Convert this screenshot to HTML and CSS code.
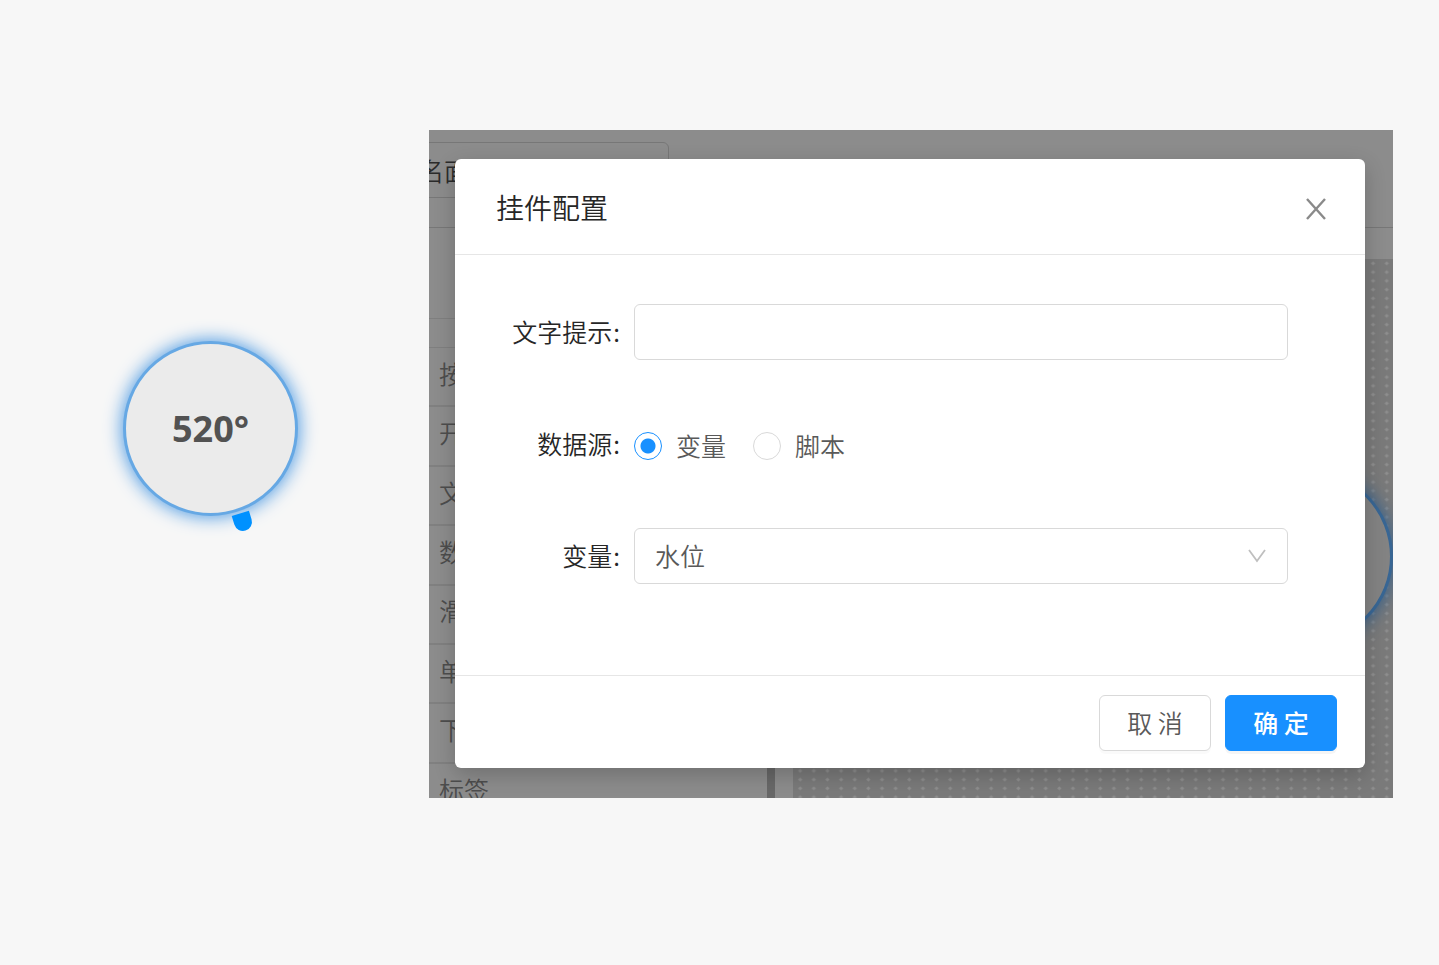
FILE: index.html
```html
<!DOCTYPE html>
<html lang="zh-CN">
<head>
<meta charset="utf-8">
<title>挂件配置</title>
<link rel="stylesheet" href="styles.css">
</head>
<body>
<main class="page">
  <div class="bubble">
    <span>520°</span>
    <svg class="bubble-pointer" width="24" height="24" viewBox="0 0 24 24" aria-hidden="true">
      <path d="M0 0H18V9A9 9 0 0 1 0 9Z" transform="translate(.7 6) rotate(-17)" fill="#0091ff"/>
    </svg>
  </div>

  <section class="stage">
    <div class="editor">
      <header class="editor-bar">
        <input class="editor-name" type="text" value="名面" aria-label="名称">
      </header>
      <div class="editor-main">
        <aside class="panel">
          <div class="panel-head"></div>
          <div class="panel-sub"></div>
          <ul class="panel-list">
            <li>按钮</li>
            <li>开关</li>
            <li>文本</li>
            <li>数值</li>
            <li>滑块</li>
            <li>单选</li>
            <li>下拉</li>
            <li>标签</li>
          </ul>
        </aside>
        <div class="canvas">
          <svg class="canvas-dots" aria-hidden="true">
            <defs>
              <pattern id="dots" width="13.64" height="8.75" patternUnits="userSpaceOnUse">
                <path d="M5 4.4L7.2 2.4L9.4 4.4L7.2 6.4Z" fill="#8e8e8e"/>
              </pattern>
            </defs>
            <rect width="100%" height="100%" fill="url(#dots)"/>
          </svg>
          <div class="canvas-bubble"></div>
        </div>
      </div>
    </div>

    <form class="modal" role="dialog" aria-labelledby="modal-title">
      <header class="modal-head">
        <h1 id="modal-title">挂件配置</h1>
        <button class="modal-close" type="button" aria-label="关闭">
          <svg width="20" height="22" viewBox="0 0 20 22" aria-hidden="true">
            <path d="M1 1L19 21M19 1L1 21" fill="none" stroke="#8a8a8a" stroke-width="2.4"/>
          </svg>
        </button>
      </header>
      <div class="modal-body">
        <div class="field">
          <label class="field-label" for="tip">文字提示<span class="colon">:</span></label>
          <input class="control" id="tip" type="text">
        </div>
        <div class="field" role="radiogroup" aria-labelledby="source-label">
          <span class="field-label" id="source-label">数据源<span class="colon">:</span></span>
          <div class="radios">
            <label class="radio"><input type="radio" name="source" checked>变量</label>
            <label class="radio"><input type="radio" name="source">脚本</label>
          </div>
        </div>
        <div class="field">
          <label class="field-label" for="variable">变量<span class="colon">:</span></label>
          <div class="select">
            <select class="control" id="variable"><option>水位</option></select>
            <svg class="select-arrow" width="18" height="14" viewBox="0 0 18 14" aria-hidden="true">
              <path d="M1 1L9 12L17 1" fill="none" stroke="#bfbfbf" stroke-width="1.8"/>
            </svg>
          </div>
        </div>
      </div>
      <footer class="modal-foot">
        <button class="btn" type="button">取 消</button>
        <button class="btn btn-primary" type="submit">确 定</button>
      </footer>
    </form>
  </section>
</main>
</body>
</html>
```
FILE: styles.css
```css
* {
  box-sizing: border-box;
}

body {
  margin: 0;
  background: #f7f7f7;
  color: #262626;
  font: 350 25px/1.5 "Noto Sans CJK SC", sans-serif;
}

input,
select,
button {
  font: inherit;
  color: inherit;
}

.page {
  display: grid;
  grid-template-columns: 429fr 964fr 46fr;
  align-items: start;
  min-height: 100vh;
  padding-top: 130px;
}

/* Value bubble */
.bubble {
  position: relative;
  display: flex;
  align-items: center;
  justify-content: center;
  justify-self: center;
  width: 175px;
  height: 175px;
  margin: 211px 8px 0 0;
  border: 3px solid #66a8e4;
  border-radius: 50%;
  background: #ebebeb;
  box-shadow: 0 0 18px 1px #4a98e2;
  color: #525252;
  font: 700 36px/1.5 "Noto Sans", sans-serif;
}

.bubble-pointer {
  position: absolute;
  left: 105px;
  top: 166px;
}

/* Dimmed editor */
.stage {
  position: relative;
  overflow: hidden;
  background: #8c8c8c;
}

.editor {
  position: absolute;
  inset: 0;
  display: flex;
  flex-direction: column;
  color: #4d4d4d;
}

.editor-bar {
  height: 98px;
  padding-top: 12px;
  border-bottom: 1px solid #777;
}

.editor-name {
  display: block;
  width: 260px;
  height: 56px;
  margin-left: -20px;
  padding: 0 9px;
  border: 1px solid #777;
  border-radius: 6px;
  background: none;
  color: #2b2b2b;
}

.editor-main {
  display: flex;
  flex: 1;
  min-height: 0;
}

.panel {
  width: 346px;
  border-right: 8px solid #686868;
}

.panel-head {
  height: 91px;
  border-bottom: 1px solid #7f7f7f;
}

.panel-sub {
  height: 29px;
  border-bottom: 1px solid #7f7f7f;
}

.panel-list {
  display: flex;
  flex-direction: column;
  height: 475px;
  margin: 0;
  padding: 0;
  list-style: none;
}

.panel-list li {
  display: flex;
  flex: 1;
  align-items: center;
  padding: 0 10px 6px;
  border-bottom: 2px solid #808080;
}

.canvas {
  position: relative;
  flex: 1;
  margin: 31px 0 0 18px;
  background: #7a7a7a;
}

.canvas-dots {
  position: absolute;
  width: 100%;
  height: 100%;
}

.canvas-bubble {
  position: absolute;
  top: 210px;
  right: 0;
  width: 175px;
  height: 175px;
  border: 3px solid #386694;
  border-radius: 50%;
  background: #838383;
  box-shadow: 0 0 18px #2a5e92;
}

/* Dialog */
.modal {
  position: relative;
  margin: 29px 28px 30px 26px;
  border-radius: 6px;
  background: #fff;
  box-shadow: 0 7px 21px rgba(0, 0, 0, .2);
}

.modal-head {
  display: flex;
  align-items: center;
  justify-content: space-between;
  height: 96px;
  padding: 0 39px 0 41px;
  border-bottom: 1px solid #e6e6e6;
}

.modal-head h1 {
  margin: 0;
  font-size: 28px;
  font-weight: 350;
}

.modal-close {
  display: flex;
  padding: 4px 0 0;
  border: 0;
  background: none;
}

.modal-body {
  display: grid;
  gap: 56px;
  padding: 49px 77px 91px 0;
}

.field {
  display: grid;
  grid-template-columns: 179px 1fr;
  align-items: center;
  height: 56px;
}

.field-label {
  text-align: right;
}

.colon {
  margin: 0 14px 0 1px;
}

.control {
  width: 100%;
  height: 56px;
  padding: 0 20px;
  border: 1px solid #d9d9d9;
  border-radius: 6px;
  background: #fff;
  color: #595959;
}

.radios {
  display: flex;
  gap: 27px;
  padding-top: 3px;
  color: #595959;
}

.radio {
  display: flex;
  align-items: center;
  gap: 14px;
}

.radio input {
  width: 28px;
  height: 28px;
  margin: 0;
  border: 1px solid #d9d9d9;
  border-radius: 50%;
  background: #fff;
  appearance: none;
}

.radio input:checked {
  border-color: #1890ff;
  background: radial-gradient(circle, #1890ff 7px, #fff 8px);
}

.select {
  position: relative;
}

.select select {
  display: block;
  appearance: none;
}

.select-arrow {
  position: absolute;
  top: 21px;
  right: 22px;
  pointer-events: none;
}

.modal-foot {
  display: flex;
  justify-content: flex-end;
  gap: 14px;
  padding: 19px 28px 17px;
  border-top: 1px solid #e6e6e6;
}

.btn {
  width: 112px;
  height: 56px;
  padding: 0;
  border: 1px solid #d9d9d9;
  border-radius: 6px;
  background: #fff;
  box-shadow: 0 3px 0 rgba(0, 0, 0, .02);
  color: #595959;
}

.btn-primary {
  border-color: #1890ff;
  background: #1890ff;
  box-shadow: 0 3px 0 rgba(0, 0, 0, .04);
  color: #fff;
  font-weight: 500;
}
```
